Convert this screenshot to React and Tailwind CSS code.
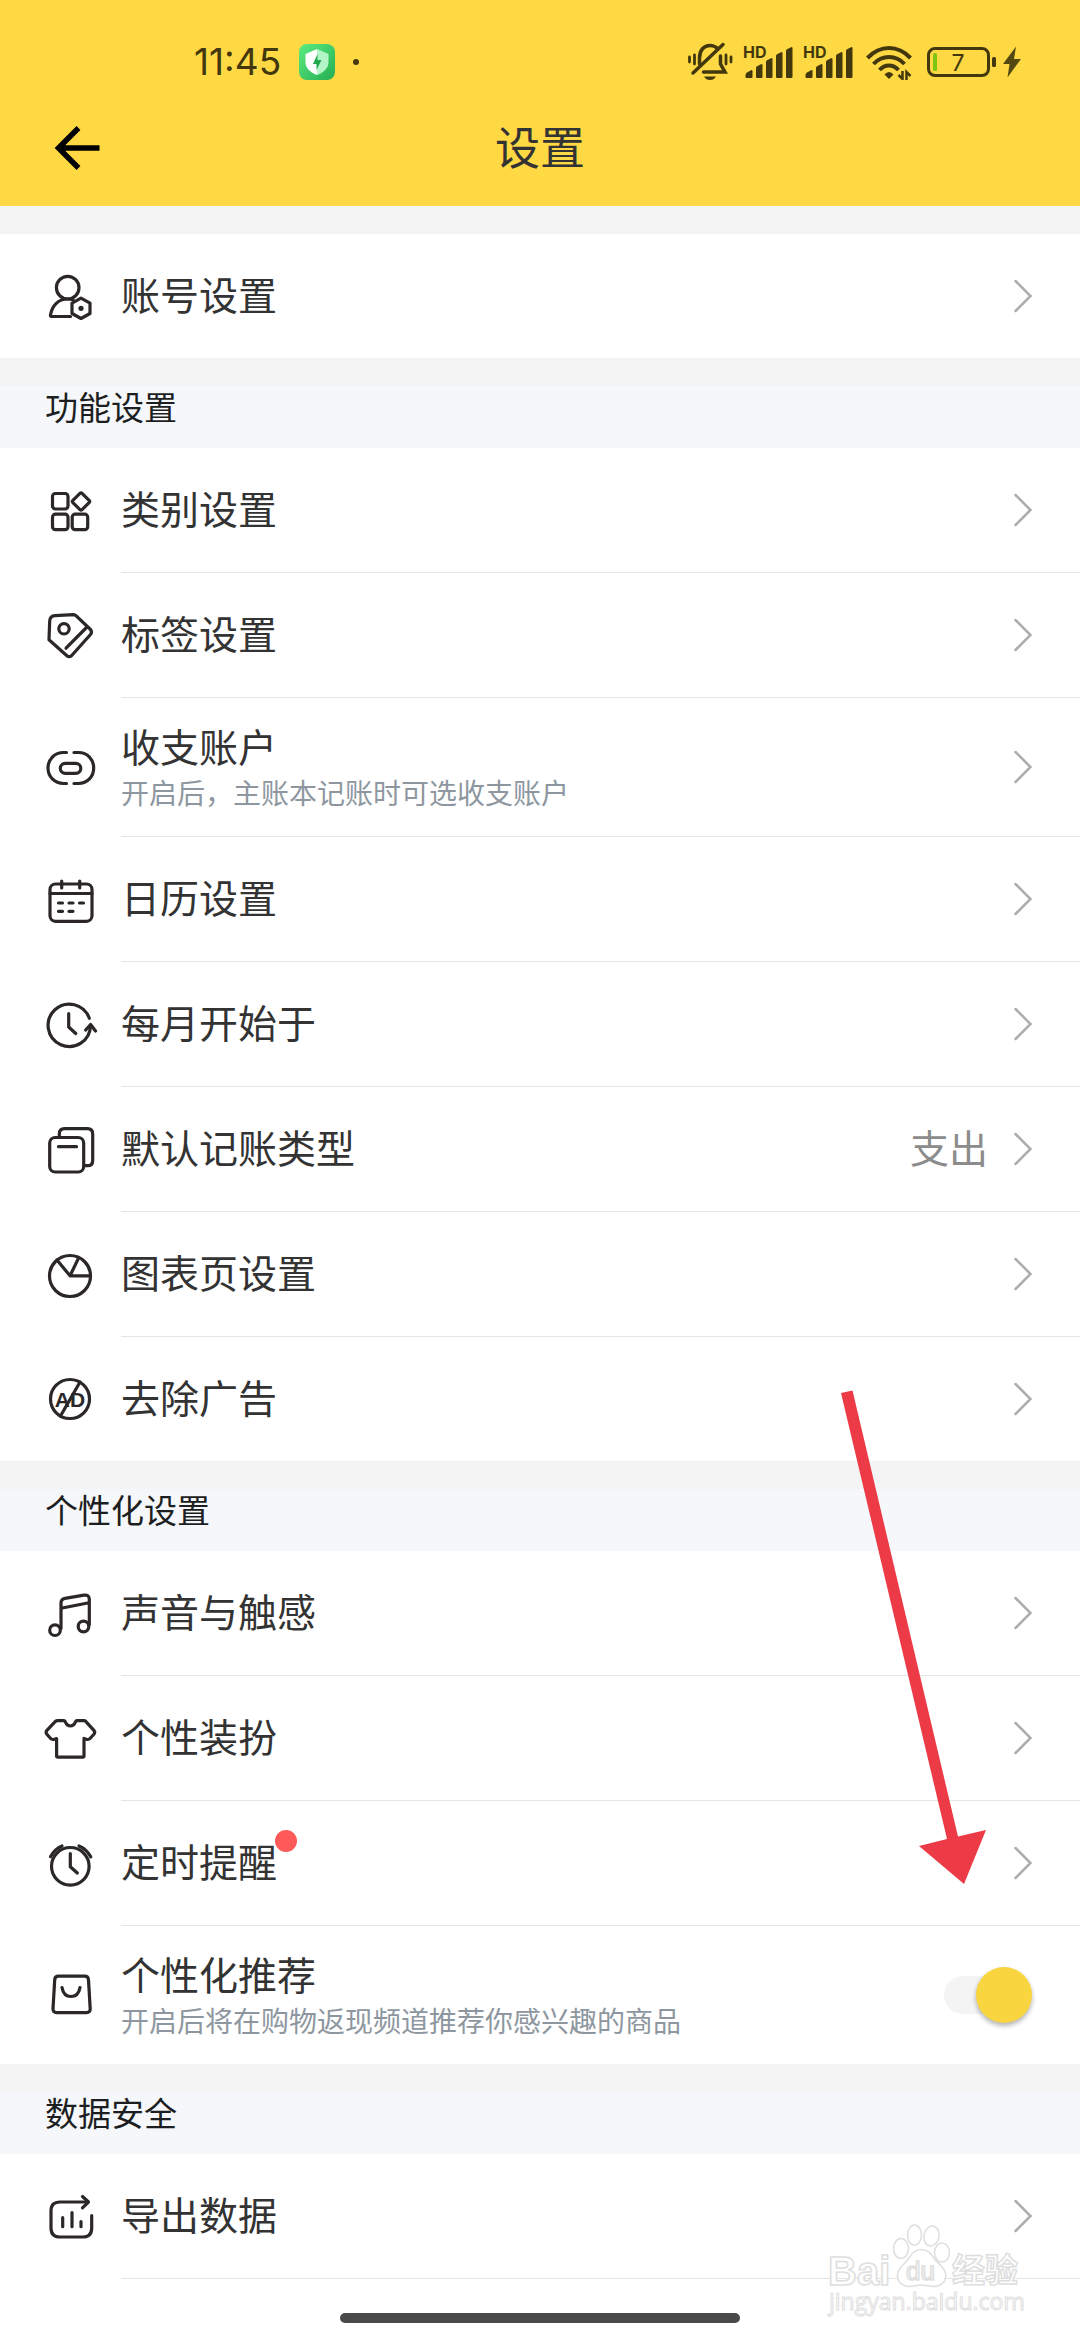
import { useState } from 'react';

const icons = {
  account: (
    <>
      <circle cx="24.7" cy="19.7" r="11.3" />
      <path d="M27.5 48.5H8.5c-1 0-1.200-.6-1-1.600C9 38 15 31 24.700 31c2.300 0 4 .3 5.300.8" />
      <path d="M38 30.200l9 5v10.300l-9 5-9-5V35.200z" />
      <circle cx="38" cy="40.300" r="2.600" fill="currentColor" stroke="none" />
    </>
  ),
  category: (
    <>
      <rect x="9.500" y="10.500" width="15.500" height="15.500" rx="3" />
      <rect x="9.500" y="31.200" width="15.500" height="15.500" rx="3" />
      <rect x="29.200" y="31.200" width="15.500" height="15.500" rx="3" />
      <rect x="31.500" y="12" width="13" height="13" rx="1.500" transform="rotate(45 38 18.500)" />
    </>
  ),
  tag: (
    <>
      <path d="M12 7.700L30.500 6.700q1.600 0 2.700 1.100L47.500 21.500q2 2.500 0 5L28.500 47.700q-2.300 2-4.600 0L6 31.700 6.700 13Q7 8.100 12 7.700z" />
      <circle cx="21" cy="20.800" r="5.200" />
      <path d="M43.500 19.500L23 40.200" />
    </>
  ),
  wallet: (
    <>
      <path d="M23.500 12.500h-3C11.500 12.500 5 19.500 5 28s6.500 15.500 15.500 15.500h3" />
      <path d="M31 12.500h4.500C44.500 12.500 50.700 19.500 50.700 28s-6.200 15.500-15.200 15.500H31" />
      <rect x="17.300" y="23.300" width="20.500" height="10" rx="5" />
    </>
  ),
  calendar: (
    <>
      <rect x="7" y="12" width="42" height="37.300" rx="5.500" />
      <path d="M7 21.500h42M18.700 9v7M36.700 9v7M15.500 31h4M26 31h4M36.500 31h4M15.500 39.300h4M26 39.300h4" />
    </>
  ),
  month: (
    <>
      <path d="M46.300 21.300A21.200 21.200 0 1 0 47.500 28.500" />
      <path d="M42.700 33l4.900-5.500 4.900 6.500M25.700 16.700V30l7 6.500" />
    </>
  ),
  type: (
    <>
      <rect x="6.700" y="15.500" width="34" height="34.500" rx="5.500" />
      <path d="M16.300 15v-3q0-5.300 5.300-5.300h22.800q5.300 0 5.300 5.300v26.400q0 5.300-5.300 5.300H41" />
      <path d="M15.500 24.700h18" />
    </>
  ),
  chart: (
    <>
      <circle cx="27" cy="29" r="20.500" />
      <path d="M14 13l13 15.800 8.700-18M27 28.800h20.500" />
    </>
  ),
  noAd: (
    <>
      <circle cx="27" cy="28" r="19.500" />
      <path d="M37 11L17.500 45" />
      <text
        x="27"
        y="35.500"
        textAnchor="middle"
        className="font-['Liberation_Sans'] text-[21px] font-bold"
        fill="currentColor"
        stroke="none"
      >
        AD
      </text>
    </>
  ),
  music: (
    <>
      <circle cx="12" cy="44.200" r="5.300" />
      <circle cx="40.500" cy="40.500" r="5.300" />
      <path d="M18 42.500V17q0-4 4-4.700l19-3.200q5-.6 5.300 4v25.500M18 22.300l28-5.500" />
    </>
  ),
  shirt: (
    <path d="M14.500 9.700h6.300q1 0 1.400 1 1.800 4.300 5.200 4.300t5.200-4.300q.4-1 1.400-1h7q1 0 1.700.6l8.200 9q1.500 1.900.2 3.700l-3.800 4.300q-1.600 1.800-4 .9L41 27.500V45q0 1.200-1.200 1.200h-25q-1.200 0-1.200-1.200V27.500l-2.200.7q-2.400.9-4-.9L3.700 23q-1.300-1.800.2-3.700l8.500-9q.9-.6 2.100-.6z" />
  ),
  alarm: (
    <>
      <circle cx="27.300" cy="30.300" r="18.800" />
      <path d="M27.300 17.500v13.200l7 6.300M7.500 20.700q4-7.500 11.500-10.700M36 10q7.500 3.200 11.800 10.900" />
    </>
  ),
  bag: (
    <>
      <path d="M15.500 9.200h26.200q3.600 0 3.800 3.600l1.700 29q.1 3.900-3.700 3.900h-29.800q-3.800 0-3.700-3.900l1.700-29q.2-3.600 3.800-3.600z" />
      <path d="M19 20.500q1.500 9 9 9t9-9" />
    </>
  ),
  exportData: (
    <>
      <path d="M44.500 13H17q-9 0-9 9v17q0 9 9 9h22.700q9 0 9-9V26.500" />
      <path d="M39.500 7.500l6 5.500-6 5.800M19.700 28.700v9M29 23.500v14.200M38 32.500v5.200" />
    </>
  ),
};

const accountRows = [{ icon: 'account', title: '账号设置' }];

const featureRows = [
  { icon: 'category', title: '类别设置' },
  { icon: 'tag', title: '标签设置' },
  { icon: 'wallet', title: '收支账户', desc: '开启后，主账本记账时可选收支账户' },
  { icon: 'calendar', title: '日历设置' },
  { icon: 'month', title: '每月开始于' },
  { icon: 'type', title: '默认记账类型', value: '支出' },
  { icon: 'chart', title: '图表页设置' },
  { icon: 'noAd', title: '去除广告' },
];

const personalRows = [
  { icon: 'music', title: '声音与触感' },
  { icon: 'shirt', title: '个性装扮' },
  { icon: 'alarm', title: '定时提醒', badge: true },
  {
    icon: 'bag',
    title: '个性化推荐',
    desc: '开启后将在购物返现频道推荐你感兴趣的商品',
    toggle: true,
  },
];

const dataRows = [{ icon: 'exportData', title: '导出数据' }];

function RowIcon({ name }) {
  return (
    <svg
      viewBox="0 0 56 56"
      className="size-14 shrink-0 text-[#2b2627]"
      fill="none"
      stroke="currentColor"
      strokeWidth="3.200"
      strokeLinecap="round"
      strokeLinejoin="round"
      aria-hidden="true"
    >
      {icons[name]}
    </svg>
  );
}

function Chevron() {
  return (
    <svg
      viewBox="0 0 20 34"
      className="h-[34px] w-5 shrink-0"
      fill="none"
      stroke="#adadad"
      strokeWidth="2.500"
      strokeLinecap="round"
      aria-hidden="true"
    >
      <path d="M3.500 2l15 15-15 15" />
    </svg>
  );
}

function Row({ row, divider }) {
  const [on, setOn] = useState(true);
  const Wrapper = row.toggle ? 'label' : 'button';

  return (
    <li>
      <Wrapper className="flex w-full cursor-pointer items-stretch gap-[22px] pl-[43px] text-left">
        <span className="flex items-center">
          <RowIcon name={row.icon} />
        </span>
        <span
          className={`flex flex-1 items-center pr-12 ${row.desc ? 'h-[138px]' : 'h-[124px]'} ${
            divider ? 'box-content border-b border-[#e5e5e5]' : ''
          }`}
        >
          <span className="flex flex-1 flex-col items-start pb-1.5">
            <span className="relative text-[39px] leading-[56px] text-[#333]">
              {row.title}
              {row.badge && (
                <span className="absolute -top-0.5 -right-5 size-[22px] rounded-full bg-[#ff5a5a]" />
              )}
            </span>
            {row.desc && (
              <span className="text-[28px] leading-[38px] text-[#8e979f]">{row.desc}</span>
            )}
          </span>
          {row.value && (
            <span className="mr-6 pb-1.5 text-[39px] leading-[56px] text-[#8c8c8c]">
              {row.value}
            </span>
          )}
          {row.toggle ? (
            <span className="flex h-14 w-[88px] items-center">
              <input
                type="checkbox"
                checked={on}
                onChange={e => setOn(e.target.checked)}
                className="relative h-[38px] w-[86px] cursor-pointer appearance-none rounded-full bg-[#f4f4f4] before:absolute before:-top-[9px] before:left-0 before:size-14 before:rounded-full before:bg-white before:shadow-[0_3px_5px_rgba(0,0,0,0.3)] checked:before:left-8 checked:before:bg-[#f9d53f]"
              />
            </span>
          ) : (
            <Chevron />
          )}
        </span>
      </Wrapper>
    </li>
  );
}

function Section({ title, rows, lastDivider }) {
  return (
    <section>
      <div className="h-7 bg-[#f4f4f4]" />
      {title && (
        <h2 className="bg-[#f5f7fa] pb-[22px] pl-[45px] text-[33px] leading-[40px] text-[#1c1e21]">
          {title}
        </h2>
      )}
      <ul className="bg-white">
        {rows.map((row, i) => (
          <Row key={row.title} row={row} divider={lastDivider || i < rows.length - 1} />
        ))}
      </ul>
    </section>
  );
}

function Signal() {
  return (
    <div className="relative h-9 w-[52px]">
      <svg viewBox="0 0 52 36" className="h-9 w-[52px]" fill="currentColor" aria-hidden="true">
        <path d="M2.500 31q0-1.500 1.500-2.500l4-2.300q1.500-.7 1.500 1V33q0 1-1 1h-5q-1 0-1-1z" />
        <path d="M13 24q0-1.200 1-1.700l4-2q1.500-.7 1.500 1V33q0 1-1 1H14q-1 0-1-1z" />
        <path d="M23 18q0-1.200 1-1.700l4-2q1.500-.7 1.500 1V33q0 1-1 1H24q-1 0-1-1z" />
        <path d="M33 12q0-1.200 1-1.700l4-2q1.500-.7 1.500 1V33q0 1-1 1H34q-1 0-1-1z" />
        <path d="M43 7q0-1.200 1-1.700l4-2q1.500-.7 1.500 1V33q0 1-1 1H44q-1 0-1-1z" />
      </svg>
      <span className="absolute -top-0.5 left-0 font-['Inter'] text-[16px] leading-5 font-bold">
        HD
      </span>
    </div>
  );
}

function StatusBar() {
  return (
    <div className="flex h-[90px] items-start justify-between pt-11 pr-[53px] pl-[194px] text-[#43380d]">
      <div className="flex h-9 items-center gap-[18px]">
        <span className="font-['Inter'] text-[37px] leading-9">11:45</span>
        <svg viewBox="0 0 36 36" className="size-9" aria-hidden="true">
          <defs>
            <linearGradient id="guard" x1="0" y1="0" x2="1" y2="1">
              <stop offset="0" stopColor="#5bed80" />
              <stop offset="1" stopColor="#25ad52" />
            </linearGradient>
          </defs>
          <rect width="36" height="36" rx="8" fill="url(#guard)" />
          <path d="M18 5L6.500 10v8c0 6 4.500 10.500 11.500 13z" fill="#fff" />
          <path d="M18 5l11.500 5v8c0 6-4.500 10.500-11.500 13z" fill="#b4f5c8" />
          <path d="M18.500 10l-4.500 10h3.500v6l5-10H18.500z" fill="#22a94e" />
        </svg>
        <span className="size-[6px] rounded-full bg-current" />
      </div>

      <div className="flex h-9 items-center">
        <svg
          viewBox="0 0 46 40"
          className="mr-[10px] h-10 w-[46px]"
          fill="none"
          stroke="currentColor"
          strokeWidth="3.500"
          strokeLinecap="round"
          aria-hidden="true"
        >
          <path d="M12.500 22v-6C12.500 8 17 3.500 23 3.500c3 0 5.500 1 7.500 3" />
          <path d="M33.500 14v8l4.500 8H16.500" />
          <path d="M6 31L36 2.500" />
          <path d="M2.500 15v5M7.500 13v9M39 13v9M44 15v5" strokeWidth="2.800" />
          <path d="M17 34.500h12q-2 3.500-6 3.500t-6-3.500z" fill="currentColor" stroke="none" />
        </svg>
        <Signal />
        <span className="w-2" />
        <Signal />
        <svg
          viewBox="0 0 48 36"
          className="ml-[10px] h-9 w-12"
          fill="none"
          stroke="currentColor"
          strokeWidth="4"
          aria-hidden="true"
        >
          <path d="M2.500 14Q12 4 24 4t21.500 10" />
          <path d="M8.500 20Q15 13 24 13t15.500 7" />
          <path d="M14.500 26Q18.500 21.500 24 21.500T33.500 26" />
          <path d="M19.500 30.500q2-2.500 4.500-2.500t4.500 2.500L24 35z" fill="currentColor" stroke="none" />
          <path d="M37.500 27v8l-4-4M41.500 36v-8l4 4" strokeWidth="2.500" />
        </svg>
        <svg viewBox="0 0 100 36" className="ml-[14px] h-9 w-[100px]" aria-hidden="true">
          <rect
            x="1.500"
            y="4.500"
            width="60"
            height="27"
            rx="6.500"
            fill="none"
            stroke="currentColor"
            strokeWidth="3"
          />
          <rect x="6" y="9" width="4" height="18" rx="1.500" fill="#7ec412" />
          <rect x="65" y="13" width="4" height="10" rx="1.500" fill="currentColor" />
          <text
            x="31"
            y="26.500"
            textAnchor="middle"
            fill="currentColor"
            className="font-['Inter'] text-[23px]"
          >
            7
          </text>
          <path d="M89 2.500L76 20h6.500L80.500 33.500 94 15h-7z" fill="currentColor" opacity=".9" />
        </svg>
      </div>
    </div>
  );
}

function Watermark() {
  return (
    <svg
      viewBox="0 0 200 96"
      className="pointer-events-none absolute right-[53px] bottom-5 h-24 w-[200px]"
      fill="#fff"
      stroke="#dedede"
      strokeWidth="1.500"
      aria-hidden="true"
    >
      <text x="1" y="61" className="font-['Liberation_Sans'] text-[40px] font-bold">
        Bai
      </text>
      <ellipse cx="74" cy="24.500" rx="7.500" ry="10" />
      <ellipse cx="87.500" cy="11" rx="7" ry="10" />
      <ellipse cx="104.500" cy="12" rx="7.500" ry="10" transform="rotate(12 104.500 12)" />
      <ellipse cx="115" cy="28.500" rx="7.500" ry="9.500" />
      <path d="M94.300 25.500c8 0 10.500 6 14 10.500s10.500 8 10.500 15c0 8-6 11.500-12 11.500-5 0-8-1.500-12.500-1.500S87 62.500 82 62.500c-6 0-11.500-4-11.500-11.500 0-7 6.500-10.500 10-15s6-10.500 13.800-10.500z" />
      <text x="79" y="56" className="font-['Liberation_Sans'] text-[26px]">
        du
      </text>
      <text x="125" y="58" className="font-['Noto_Sans_CJK_SC'] text-[33px] font-bold">
        经验
      </text>
      <text x="2" y="86" strokeWidth="1" className="font-['Open_Sans'] text-[23px]">
        jingyan.baidu.com
      </text>
    </svg>
  );
}

export default function App() {
  return (
    <div className="relative flex min-h-screen flex-col overflow-hidden bg-white font-['Noto_Sans_CJK_SC',sans-serif]">
      <header className="bg-[#ffd943]">
        <StatusBar />
        <div className="grid h-[116px] grid-cols-[1fr_auto_1fr] items-center px-[54px]">
          <button aria-label="返回" className="w-12">
            <svg
              viewBox="0 0 48 48"
              className="size-12"
              fill="none"
              stroke="#000"
              strokeWidth="5.500"
              aria-hidden="true"
            >
              <path d="M24.500 4L4.500 24l20 20M5 24h40.500" />
            </svg>
          </button>
          <h1 className="pb-1 text-[45px] leading-[60px] text-[#333]">设置</h1>
        </div>
      </header>

      <main>
        <Section rows={accountRows} />
        <Section title="功能设置" rows={featureRows} />
        <Section title="个性化设置" rows={personalRows} />
        <Section title="数据安全" rows={dataRows} lastDivider />
      </main>

      <footer className="mt-auto flex justify-center pt-8 pb-[17px]">
        <div className="h-[10px] w-[37%] rounded-full bg-[#4a4a4a]" />
      </footer>

      <Watermark />

      {/* pointer to the recommendation switch */}
      <svg
        viewBox="0 0 146 496"
        className="pointer-events-none absolute top-[1389px] right-[94px] h-[496px] w-[146px]"
        fill="#ec3a47"
        aria-hidden="true"
      >
        <path d="M1 4l11.500-2.500L118 447.500l28-6.500-22 54-45-38 28-7z" />
      </svg>
    </div>
  );
}
